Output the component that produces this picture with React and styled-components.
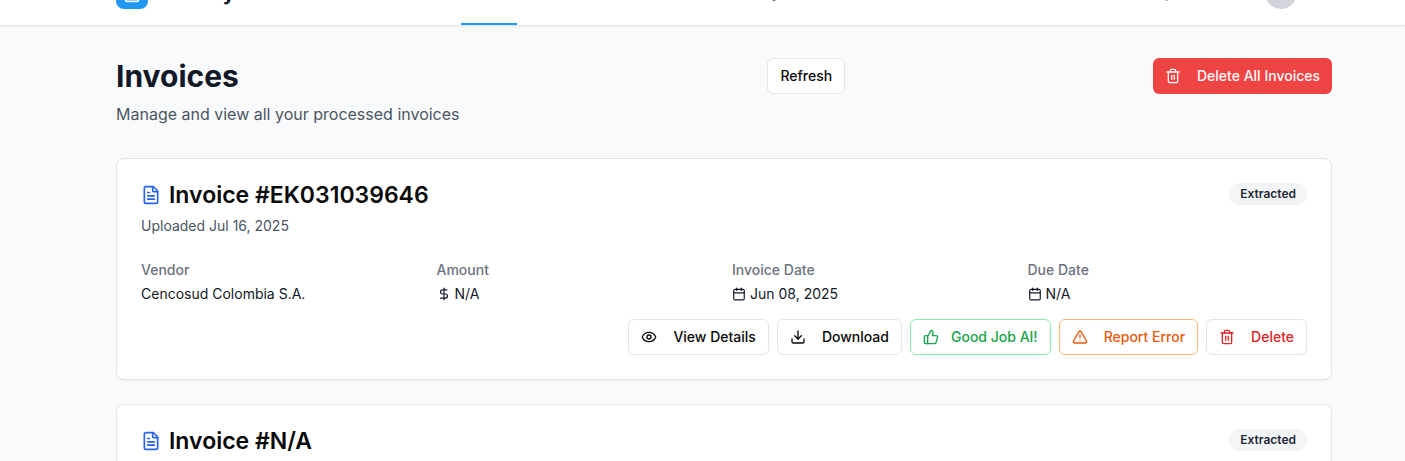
import React from "react";
import styled, { createGlobalStyle, css } from "styled-components";
import {
  Calendar,
  DollarSign,
  Download,
  Eye,
  FileText,
  ThumbsUp,
  Trash2,
  TriangleAlert,
} from "lucide-react";

const GlobalStyle = createGlobalStyle`
  *, *::before, *::after { box-sizing: border-box; }
  html { overflow: hidden; }
  body {
    margin: 0;
    height: 100vh;
    overflow: hidden;
    background: #f9fafb;
    color: #0a0a0a;
    font-family: Inter, "Liberation Sans", sans-serif;
    font-size: 16px;
    line-height: 24px;
  }
  h1, h2, p, dl, dt, dd { margin: 0; }
  button { font: inherit; cursor: pointer; }
  svg { flex-shrink: 0; }
`;

/* The page is scrolled slightly, so the top of the bar is out of view. */
const TopBar = styled.header`
  display: flex;
  align-items: center;
  height: 65px;
  margin-top: -39px;
  padding: 0 108px 0 116px;
  background: #fff;
  border-bottom: 1px solid #e5e7eb;
  box-shadow: 0 1px 2px rgba(0, 0, 0, 0.05);
`;

const Brand = styled.a`
  display: flex;
  align-items: center;
  gap: 12px;
  color: #111827;
  font-size: 20px;
  font-weight: 700;
  line-height: 28px;
  text-decoration: none;
`;

const BrandMark = styled.span`
  display: flex;
  align-items: center;
  justify-content: center;
  width: 32px;
  height: 32px;
  border-radius: 8px;
  background: #2196f3;
  color: #fff;
`;

const Nav = styled.nav`
  display: flex;
  align-self: stretch;
  gap: 32px;
  margin-left: 67px;
`;

const NavLink = styled.a`
  display: flex;
  align-items: center;
  border-top: 2px solid transparent;
  border-bottom: 2px solid ${(p) => (p.$active ? "#2196f3" : "transparent")};
  color: ${(p) => (p.$active ? "#111827" : "#6b7280")};
  font-size: 14px;
  font-weight: 500;
  text-decoration: none;
`;

const Account = styled.div`
  display: flex;
  align-items: center;
  gap: 20px;
  margin-left: auto;
  color: #374151;
  font-size: 14px;
`;

const Avatar = styled.span`
  width: 32px;
  height: 32px;
  border-radius: 50%;
  background: #d1d5db;
`;

const Main = styled.main`
  padding: 32px 73px 32px 116px;
`;

const PageHead = styled.div`
  display: flex;
  align-items: flex-start;
  justify-content: space-between;
  margin-bottom: 32px;
`;

const PageTitle = styled.h1`
  color: #111827;
  font-size: 30px;
  font-weight: 700;
  line-height: 36px;
`;

const Subtitle = styled.p`
  margin-top: 8px;
  color: #4b5563;
`;

const tones = {
  plain: css`
    background: #fff;
    border: 1px solid #e5e5e5;
    color: #0a0a0a;
  `,
  solid: css`
    background: #ef4444;
    border: 0;
    color: #fafafa;
  `,
  good: css`
    background: #fff;
    border: 1px solid #86efac;
    color: #16a34a;
  `,
  warn: css`
    background: #fff;
    border: 1px solid #fdba74;
    color: #ea580c;
  `,
  danger: css`
    background: #fff;
    border: 1px solid #e5e5e5;
    color: #dc2626;
  `,
};

const Button = styled.button`
  display: inline-flex;
  align-items: center;
  gap: ${(p) => (p.$compact ? "12px" : "16px")};
  height: 36px;
  padding: 0 12px;
  border-radius: 6px;
  font-size: 14px;
  font-weight: 500;
  line-height: 20px;
  white-space: nowrap;
  ${(p) => tones[p.$tone || "plain"]}
`;

const List = styled.div`
  display: grid;
  gap: 24px;
`;

const Card = styled.article`
  padding: 24px;
  border: 1px solid #e5e5e5;
  border-radius: 8px;
  background: #fff;
  box-shadow: 0 1px 2px rgba(0, 0, 0, 0.05);
`;

const CardHead = styled.div`
  display: flex;
  align-items: flex-start;
  justify-content: space-between;
  margin-bottom: 24px;
`;

const CardTitle = styled.h2`
  display: flex;
  align-items: center;
  gap: 8px;
  font-size: 23px;
  font-weight: 600;
  line-height: 24px;

  svg { color: #2563eb; }
`;

const Uploaded = styled.p`
  margin-top: 9px;
  color: #4b5563;
  font-size: 14px;
  line-height: 20px;
`;

const Badge = styled.span`
  padding: 3px 11px;
  border-radius: 11px;
  background: #f3f4f6;
  color: #1f2937;
  font-size: 12px;
  font-weight: 600;
  line-height: 16px;
`;

const Fields = styled.dl`
  display: grid;
  grid-template-columns: repeat(4, 1fr);
  gap: 16px;
  margin-bottom: 15px;
  font-size: 14px;
  line-height: 20px;
`;

const Label = styled.dt`
  color: #6b7280;
  font-weight: 500;
`;

const Value = styled.dd`
  display: flex;
  align-items: center;
  gap: 4px;
  margin-top: 4px;
  color: #111827;
`;

const Actions = styled.div`
  display: flex;
  justify-content: flex-end;
  gap: 8px;
`;

function Field({ label, icon: Icon, children }) {
  return (
    <div>
      <Label>{label}</Label>
      <Value>
        {Icon && <Icon size={14} />}
        {children}
      </Value>
    </div>
  );
}

function InvoiceCard({ number, uploaded, vendor, amount, date, due }) {
  return (
    <Card>
      <CardHead>
        <div>
          <CardTitle>
            <FileText size={20} />
            Invoice #{number}
          </CardTitle>
          <Uploaded>Uploaded {uploaded}</Uploaded>
        </div>
        <Badge>Extracted</Badge>
      </CardHead>
      <Fields>
        <Field label="Vendor">{vendor}</Field>
        <Field label="Amount" icon={DollarSign}>{amount}</Field>
        <Field label="Invoice Date" icon={Calendar}>{date}</Field>
        <Field label="Due Date" icon={Calendar}>{due}</Field>
      </Fields>
      <Actions>
        <Button><Eye size={16} />View Details</Button>
        <Button><Download size={16} />Download</Button>
        <Button $tone="good" $compact><ThumbsUp size={16} />Good Job AI!</Button>
        <Button $tone="warn"><TriangleAlert size={16} />Report Error</Button>
        <Button $tone="danger"><Trash2 size={16} />Delete</Button>
      </Actions>
    </Card>
  );
}

const invoices = [
  { number: "EK031039646", uploaded: "Jul 16, 2025", vendor: "Cencosud Colombia S.A.", amount: "N/A", date: "Jun 08, 2025", due: "N/A" },
  { number: "N/A", uploaded: "Jul 16, 2025", vendor: "N/A", amount: "N/A", date: "N/A", due: "N/A" },
];

export default function App() {
  return (
    <>
      <GlobalStyle />
      <TopBar>
        <Brand href="#home">
          <BrandMark><FileText size={20} /></BrandMark>
          Factory Docs
        </Brand>
        <Nav>
          <NavLink href="#dashboard">Dashboard</NavLink>
          <NavLink href="#invoices" $active>Invoices</NavLink>
          <NavLink href="#vendors">Vendors</NavLink>
          <NavLink href="#customers">Customers</NavLink>
          <NavLink href="#analytics">Analytics</NavLink>
        </Nav>
        <Account>
          Empresa Demo
          <Avatar />
        </Account>
      </TopBar>
      <Main>
        <PageHead>
          <div>
            <PageTitle>Invoices</PageTitle>
            <Subtitle>Manage and view all your processed invoices</Subtitle>
          </div>
          <Button>Refresh</Button>
          <Button $tone="solid"><Trash2 size={16} />Delete All Invoices</Button>
        </PageHead>
        <List>
          {invoices.map((invoice) => (
            <InvoiceCard key={invoice.number} {...invoice} />
          ))}
        </List>
      </Main>
    </>
  );
}
